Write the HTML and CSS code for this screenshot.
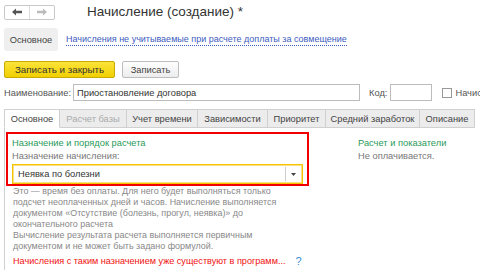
FILE: index.html
```html
<!DOCTYPE html>
<html lang="ru">
<head>
<meta charset="utf-8">
<link rel="stylesheet" href="styles.css">
</head>
<body>
<div class="page">
  <div class="header">
    <div class="nav">
      <span class="nav-btn"><svg width="12" height="8" viewBox="0 0 12 8"><path d="M1 4 L5 0.5 L5 2.8 L11 2.8 L11 5.2 L5 5.2 L5 7.5 Z" fill="#555"/></svg></span>
      <span class="nav-btn"><svg width="12" height="8" viewBox="0 0 12 8"><path d="M11 4 L7 0.5 L7 2.8 L1 2.8 L1 5.2 L7 5.2 L7 7.5 Z" fill="#bbb"/></svg></span>
    </div>
    <div class="title">Начисление (создание) *</div>
  </div>
  <div class="sections">
    <span class="section-btn">Основное</span>
    <span class="section-link">Начисления не учитываемые при расчете доплаты за совмещение</span>
  </div>
  <div class="commands">
    <span class="btn btn-primary">Записать и закрыть</span>
    <span class="btn">Записать</span>
  </div>
  <div class="name-row">
    <span class="label">Наименование:</span>
    <span class="input input-name">Приостановление договора</span>
    <span class="label label-code">Код:</span>
    <span class="input input-code"></span>
    <span class="checkbox"></span>
    <span class="label">Начисл</span>
  </div>
  <div class="tabs">
    <span class="tab active w56">Основное</span>
    <span class="tab disabled w67">Расчет базы</span>
    <span class="tab w71">Учет времени</span>
    <span class="tab w70">Зависимости</span>
    <span class="tab w58">Приоритет</span>
    <span class="tab w94">Средний заработок</span>
    <span class="tab w55">Описание</span>
  </div>
  <div class="panel">
    <div class="columns">
      <div class="highlight">
        <div class="group-title">Назначение и порядок расчета</div>
        <div class="field-label">Назначение начисления:</div>
        <div class="select">
          <span class="select-text">Неявка по болезни</span>
          <span class="select-btn"><svg width="5" height="3" viewBox="0 0 5 3"><path d="M0 0 L5 0 L2.5 3 Z" fill="#444"/></svg></span>
        </div>
      </div>
      <div class="right-col">
        <div class="group-title">Расчет и показатели</div>
        <div class="note">Не оплачивается.</div>
      </div>
    </div>
    <div class="desc">
      <p>Это — время без оплаты. Для него будет выполняться только<br>подсчет неоплаченных дней и часов. Начисление выполняется<br>документом «Отсутствие (болезнь, прогул, неявка)» до<br>окончательного расчета</p>
      <p>Вычисление результата расчета выполняется первичным<br>документом и не может быть задано формулой.</p>
    </div>
    <div class="warning">
      <span class="warn-text">Начисления с таким назначением уже существуют в программ...</span>
      <span class="help">?</span>
    </div>
  </div>
</div>
</body>
</html>
```

FILE: styles.css
```css
* { box-sizing: border-box; }
html, body { margin: 0; padding: 0; background: #fff; }
body {
  font-family: "Liberation Sans", Arial, sans-serif;
  font-size: 9.3px;
  color: #444;
  width: 480px;
  height: 270px;
  overflow: hidden;
}
.page { padding: 4px 0 0 4px; }
.header { display: flex; align-items: center; height: 16px; }
.nav {
  display: flex;
  width: 51px;
  height: 15px;
  border: 1px solid #c8c8c8;
  border-radius: 2px;
  background: #fff;
}
.nav-btn {
  flex: 1;
  display: flex;
  align-items: center;
  justify-content: center;
}
.nav-btn + .nav-btn { border-left: 1px solid #dcdcdc; }
.title {
  margin-left: 32px;
  font-size: 13.5px;
  color: #333;
  line-height: 16px;
}
.sections {
  display: flex;
  align-items: center;
  margin-top: 8px;
  height: 23px;
}
.section-btn {
  display: flex;
  align-items: center;
  justify-content: center;
  width: 54px;
  height: 23px;
  background: #efefef;
  border-radius: 3px;
  color: #444;
}
.section-link {
  margin-left: 8px;
  color: #3c5cc0;
  border-bottom: 1px dotted #3c5cc0;
  line-height: 11px;
  font-size: 9px;
}
.commands { display: flex; margin-top: 10px; gap: 7px; }
.btn {
  display: flex;
  align-items: center;
  justify-content: center;
  height: 17px;
  width: 57px;
  border: 1px solid #bdbdbd;
  border-radius: 2px;
  background: linear-gradient(#fff, #ececec);
  color: #444;
  white-space: nowrap;
}
.btn-primary {
  width: 111px;
  font-size: 9.8px;
  background: linear-gradient(#fbe43a, #f1cf00);
  border-color: #c9aa00;
  color: #333;
}
.name-row {
  display: flex;
  align-items: center;
  margin-top: 6px;
  height: 17px;
  white-space: nowrap;
}
.label { color: #555; }
.input {
  height: 17px;
  border: 1px solid #bcbcbc;
  background: #fff;
  display: flex;
  align-items: center;
  padding-left: 3px;
  color: #333;
  flex-shrink: 0;
}
.input-name { margin-left: 2px; width: 287px; }
.label-code { margin-left: 9px; }
.input-code { margin-left: 3px; width: 42px; }
.checkbox {
  margin-left: 10px;
  width: 10px;
  height: 10px;
  border: 1px solid #999;
  background: #fff;
  margin-right: 3px;
  flex-shrink: 0;
}
.tabs {
  display: flex;
  margin-top: 8px;
  height: 19px;
}
.tab {
  display: flex;
  align-items: center;
  justify-content: center;
  background: #ececec;
  border: 1px solid #d0d0d0;
  border-left: none;
  color: #444;
  white-space: nowrap;
  flex-shrink: 0;
}
.tab:first-child { border-left: 1px solid #d0d0d0; }
.tab.active { background: #fff; border-bottom-color: #fff; }
.tab.disabled { color: #aaa; }
.w56 { width: 56px; }
.w67 { width: 67px; }
.w71 { width: 71px; }
.w70 { width: 70px; }
.w58 { width: 58px; }
.w94 { width: 94px; }
.w55 { width: 55px; }
.panel {
  border-left: 1px solid #d0d0d0;
  padding: 4px 0 0 1px;
  height: 143px;
}
.columns { display: flex; }
.highlight {
  width: 303px;
  height: 54px;
  border: 2px solid #f20000;
  padding: 3px 6px 0 4px;
}
.group-title { color: #2a9a5a; line-height: 13px; }
.field-label { color: #777; line-height: 13px; }
.select {
  display: flex;
  align-items: center;
  margin-top: 1px;
  width: 291px;
  height: 20px;
  border: 1px solid #f2c500;
  box-shadow: inset 0 0 0 1px #fbe080;
  background: #fff;
}
.select-text { flex: 1; padding-left: 5px; color: #333; }
.select-btn {
  width: 16px;
  height: 14px;
  border-left: 1px solid #ccc;
  display: flex;
  align-items: center;
  justify-content: center;
  margin-right: 1px;
}
.right-col { margin-left: 49px; padding-top: 5px; }
.note { color: #777; line-height: 13px; }
.desc { padding-left: 7px; color: #888; line-height: 11px; font-size: 8.95px; }
.desc p { margin: 0; }
.warning { display: flex; align-items: center; margin-top: 3px; padding-left: 7px; }
.warn-text { color: #f01010; font-size: 9.1px; }
.help { margin-left: 10px; color: #3e8fd8; font-size: 11px; }
```
